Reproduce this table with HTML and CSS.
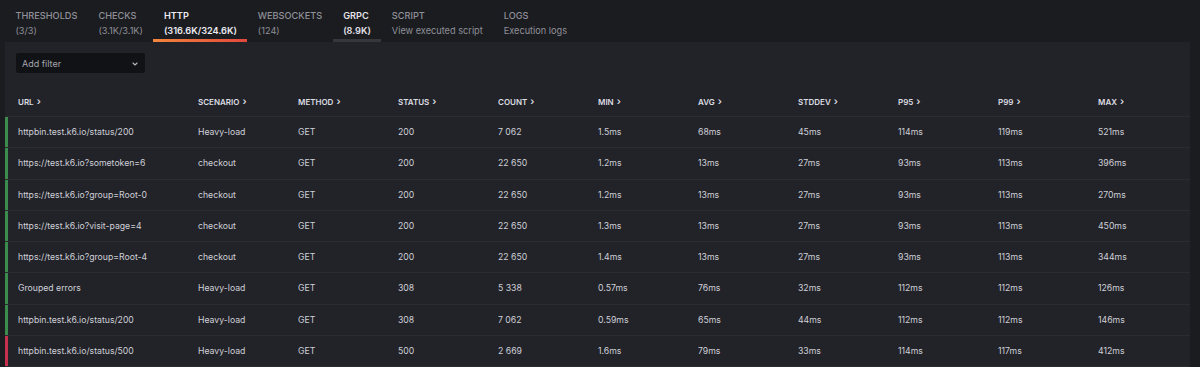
FILE: index.html
```html
<!DOCTYPE html>
<html>
<head>
    <title>HTTP requests</title>
    <link rel="stylesheet" href="styles.css">
</head>
<body>
    <div class="tabs">
        <div class="tab"><span class="tab-label">Thresholds</span><span class="tab-value">(3/3)</span></div>
        <div class="tab"><span class="tab-label">Checks</span><span class="tab-value">(3.1K/3.1K)</span></div>
        <div class="tab active"><span class="tab-label">HTTP</span><span class="tab-value">(316.6K/324.6K)</span></div>
        <div class="tab"><span class="tab-label">Websockets</span><span class="tab-value">(124)</span></div>
        <div class="tab hover"><span class="tab-label">GRPC</span><span class="tab-value">(8.9K)</span></div>
        <div class="tab"><span class="tab-label">Script</span><span class="tab-value">View executed script</span></div>
        <div class="tab"><span class="tab-label">Logs</span><span class="tab-value">Execution logs</span></div>
    </div>

    <div class="panel">
        <div class="toolbar">
            <div class="filter-select">
                <span>Add filter</span>
                <svg width="8" height="8" viewBox="0 0 8 8"><path d="M2 3l2 2 2-2" fill="none" stroke="#b4b5bd" stroke-width="1.1" stroke-linecap="round" stroke-linejoin="round"/></svg>
            </div>
        </div>

        <div class="table">
            <div class="row head">
                <div class="cells">
                    <div>URL <span class="chev">›</span></div>
                    <div>Scenario <span class="chev">›</span></div>
                    <div>Method <span class="chev">›</span></div>
                    <div>Status <span class="chev">›</span></div>
                    <div>Count <span class="chev">›</span></div>
                    <div>Min <span class="chev">›</span></div>
                    <div>Avg <span class="chev">›</span></div>
                    <div>Stddev <span class="chev">›</span></div>
                    <div>P95 <span class="chev">›</span></div>
                    <div>P99 <span class="chev">›</span></div>
                    <div>Max <span class="chev">›</span></div>
                </div>
            </div>
            <div id="rows"></div>
        </div>
    </div>

    <script>
        const rows = [
            ['ok', 'httpbin.test.k6.io/status/200', 'Heavy-load', 'GET', '200', '7 062', '1.5ms', '68ms', '45ms', '114ms', '119ms', '521ms'],
            ['ok', 'https://test.k6.io?sometoken=6', 'checkout', 'GET', '200', '22 650', '1.2ms', '13ms', '27ms', '93ms', '113ms', '396ms'],
            ['ok', 'https://test.k6.io?group=Root-0', 'checkout', 'GET', '200', '22 650', '1.2ms', '13ms', '27ms', '93ms', '113ms', '270ms'],
            ['ok', 'https://test.k6.io?visit-page=4', 'checkout', 'GET', '200', '22 650', '1.3ms', '13ms', '27ms', '93ms', '113ms', '450ms'],
            ['ok', 'https://test.k6.io?group=Root-4', 'checkout', 'GET', '200', '22 650', '1.4ms', '13ms', '27ms', '93ms', '113ms', '344ms'],
            ['ok', 'Grouped errors', 'Heavy-load', 'GET', '308', '5 338', '0.57ms', '76ms', '32ms', '112ms', '112ms', '126ms'],
            ['ok', 'httpbin.test.k6.io/status/200', 'Heavy-load', 'GET', '308', '7 062', '0.59ms', '65ms', '44ms', '112ms', '112ms', '146ms'],
            ['fail', 'httpbin.test.k6.io/status/500', 'Heavy-load', 'GET', '500', '2 669', '1.6ms', '79ms', '33ms', '114ms', '117ms', '412ms']
        ];

        const container = document.getElementById('rows');
        rows.forEach(([state, ...cells]) => {
            const row = document.createElement('div');
            row.className = 'row';
            row.innerHTML = `<div class="cells ${state}">${cells.map(c => `<div>${c}</div>`).join('')}</div>`;
            container.appendChild(row);
        });
    </script>
</body>
</html>
```

FILE: styles.css
```css
body {
    margin: 0;
    padding: 0 10px 0 5px;
    background-color: #1b1c20;
    font-family: Inter, 'Noto Sans', sans-serif;
    color: #cccdd6;
    overflow: hidden;
}
.tabs {
    display: flex;
    height: 42px;
}
.tab {
    display: flex;
    flex-direction: column;
    padding: 8px 10.5px 1px 10.5px;
    border-bottom: 3px solid transparent;
    font-size: 9.2px;
    line-height: 15px;
    color: #8f9098;
}
.tab-label {
    text-transform: uppercase;
    font-weight: 500;
}
.tab.active {
    color: #ebebf0;
    font-weight: 600;
    border-image: linear-gradient(90deg, #f3863c, #e2483d) 1;
}
.tab.active .tab-label,
.tab.hover .tab-label {
    font-weight: 600;
}
.tab.hover {
    color: #e2e2e8;
    font-weight: 600;
    border-bottom-color: #36373d;
}
.panel {
    background: #222328;
    padding-top: 11px;
    height: 325px;
}
.toolbar {
    padding-left: 11px;
    margin-bottom: 12px;
}
.filter-select {
    width: 129px;
    height: 20px;
    box-sizing: border-box;
    background: #111216;
    border-radius: 2px;
    display: flex;
    align-items: center;
    justify-content: space-between;
    padding: 0 6px 0 6px;
    font-size: 9px;
    color: #a4a5ad;
}
.filter-select svg {
    margin-top: 1px;
}
.row {
    height: 31.25px;
    box-sizing: border-box;
    border-bottom: 1px solid #2b2c31;
    display: flex;
}
.row.head {
    height: 32px;
}
.cells {
    flex: 1;
    display: grid;
    grid-template-columns: 180px repeat(9, 100px) 1fr;
    align-items: center;
    padding-left: 10px;
    border-left: 3px solid transparent;
    font-size: 8.7px;
    color: #cfd0d8;
    white-space: nowrap;
}
.cells.ok {
    border-left-color: #3b8a4e;
}
.cells.fail {
    border-left-color: #c6304f;
}
.head .cells {
    font-size: 8px;
    font-weight: 600;
    text-transform: uppercase;
    color: #dcdde3;
}
.chev {
    font-size: 10px;
    margin-left: 1px;
}
```
